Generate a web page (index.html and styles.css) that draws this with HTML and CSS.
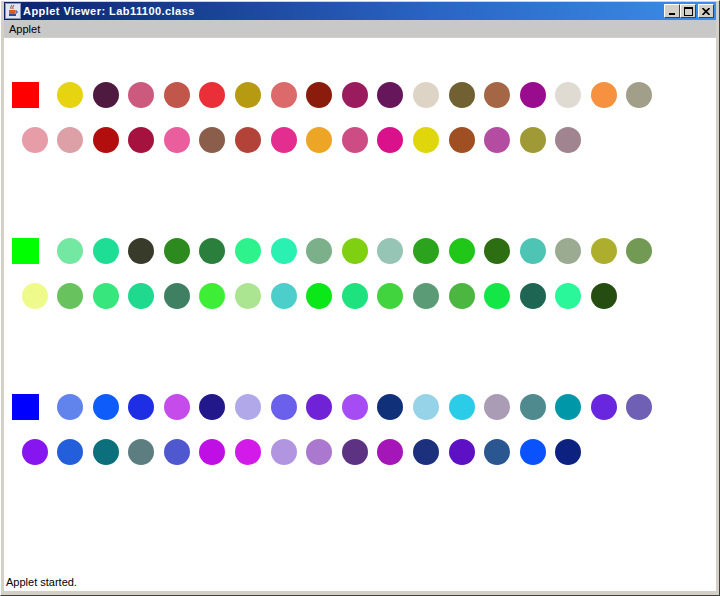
FILE: index.html
```html
<!DOCTYPE html>
<html lang="en">
<head>
  <meta charset="UTF-8">
  <title>Applet Viewer: Lab11100.class</title>
  <link rel="stylesheet" href="styles.css">
</head>
<body>
  <div class="window">
    <div class="titlebar">
      <svg class="app-icon" width="16" height="16" viewBox="0 0 16 16">
        <rect x="0.5" y="0.5" width="15" height="15" fill="#dfe6f2" stroke="#8a97b0"/>
        <path d="M4 11 h7 v2 h-7 z" fill="#2c4f9c"/>
        <path d="M4 7 h6 v4 h-6 z" fill="#d85a2a"/>
        <path d="M10 8 h2 v2 h-2" fill="none" stroke="#2c4f9c"/>
        <path d="M6 6 q-1 -2 1 -4 M8 6 q-1 -2 1 -4" fill="none" stroke="#c43a2a"/>
      </svg>
      <span class="title">Applet Viewer: Lab11100.class</span>
      <div class="controls">
        <span class="ctl">
          <svg width="8" height="7" viewBox="0 0 8 7"><rect x="1" y="5" width="6" height="2" fill="#000"/></svg>
        </span>
        <span class="ctl">
          <svg width="9" height="9" viewBox="0 0 9 9"><rect x="0.5" y="0.5" width="8" height="8" fill="none" stroke="#000"/><rect x="0" y="0" width="9" height="2" fill="#000"/></svg>
        </span>
        <span class="ctl close">
          <svg width="8" height="7" viewBox="0 0 8 7"><path d="M0.5 0 L7.5 7 M7.5 0 L0.5 7" stroke="#000" stroke-width="1.6"/></svg>
        </span>
      </div>
    </div>
    <div class="menubar"><span class="menu">Applet</span></div>
    <div class="applet" id="applet"></div>
    <div class="status">Applet started.</div>
  </div>

  <script>
    // Each group: base colour square, then two rows of random shades
    var groups = [
      {
        base: '#ff0000',
        top: ['#e6d411', '#4f1a3f', '#cb5a7e', '#c1564a', '#ea2f38', '#b59a12', '#dd6a6b', '#8b1b0d', '#9a1c5e',
              '#66165b', '#ded4c6', '#716032', '#a46644', '#990c8e', '#dfdbd2', '#f6913f', '#a19e8a'],
        bottom: ['#e69da7', '#dda0a6', '#b30e0e', '#a6123f', '#eb5e9e', '#8b5e4c', '#b34338', '#e32d8f',
                 '#eda526', '#ce4c84', '#d9118b', '#e0d60c', '#a04f22', '#b44da2', '#a09a36', '#a08490']
      },
      {
        base: '#00ff00',
        top: ['#73e8a2', '#1ede95', '#383b2a', '#2d8a1e', '#2a7f3d', '#2ef28c', '#2af0b2', '#7cb08a', '#7ed011',
              '#97c5b5', '#2ca31d', '#20c618', '#2c6e11', '#4ec4b4', '#9bab92', '#adae2e', '#729a55'],
        bottom: ['#eefa8a', '#68c35e', '#37e67c', '#1ed98e', '#3f8062', '#3eee36', '#abe592', '#4ccfcb', '#0ae81a',
                 '#1ee27e', '#42d43e', '#5b9b76', '#4bb640', '#14e648', '#1f6553', '#2af79a', '#254d12']
      },
      {
        base: '#0000ff',
        top: ['#6184ec', '#0e5cfa', '#1e2ee4', '#c64beb', '#23188b', '#b1a8ea', '#6b60ec', '#7023d6', '#a64cf4',
              '#10307a', '#96d3e8', '#2bcce8', '#a99cb4', '#4e8a8e', '#0097a8', '#6826de', '#6f60b5'],
        bottom: ['#8615ef', '#245fdb', '#0c6f7c', '#5c7e80', '#5058cf', '#c00fe5', '#d21ae9', '#b295e0',
                 '#ab78d0', '#5e3282', '#a416b8', '#1c307e', '#5d10c4', '#2a5691', '#0a52fb', '#0d2180']
      }
    ];

    function makeDot(color) {
      var dot = document.createElement('span');
      dot.className = 'dot';
      dot.style.backgroundColor = color;
      return dot;
    }

    function buildApplet() {
      var applet = document.getElementById('applet');
      for (var i = 0; i < groups.length; i++) {
        var group = document.createElement('div');
        group.className = 'group';

        var first = document.createElement('div');
        first.className = 'row row-first';
        var square = document.createElement('span');
        square.className = 'square';
        square.style.backgroundColor = groups[i].base;
        first.appendChild(square);
        for (var j = 0; j < groups[i].top.length; j++) {
          first.appendChild(makeDot(groups[i].top[j]));
        }

        var second = document.createElement('div');
        second.className = 'row row-second';
        for (var k = 0; k < groups[i].bottom.length; k++) {
          second.appendChild(makeDot(groups[i].bottom[k]));
        }

        group.appendChild(first);
        group.appendChild(second);
        applet.appendChild(group);
      }
    }

    buildApplet();
  </script>
</body>
</html>
```

FILE: styles.css
```css
* {
  box-sizing: border-box;
}

body {
  margin: 0;
  font-family: "Liberation Sans", Arial, sans-serif;
  background-color: #d4d0c8;
}

.window {
  width: 720px;
  height: 596px;
  display: flex;
  flex-direction: column;
  padding: 1px 3px 4px 3px;
  background-color: #d4d0c8;
  border-left: 1px solid #ffffff;
  border-top: 1px solid #ffffff;
  border-right: 1px solid #404040;
  border-bottom: 1px solid #404040;
}

.titlebar {
  height: 18px;
  display: flex;
  align-items: center;
  padding: 0 2px 0 1px;
  background: linear-gradient(90deg, #0a246a 0%, #2a64c4 60%, #3c8ee8 100%);
  color: #fff;
}

.app-icon {
  flex: none;
  margin-right: 2px;
}

.title {
  font-weight: bold;
  font-size: 11px;
  letter-spacing: 0.45px;
}

.controls {
  margin-left: auto;
  display: flex;
}

.ctl {
  width: 16px;
  height: 14px;
  display: flex;
  align-items: center;
  justify-content: center;
  background-color: #d4d0c8;
  border-top: 1px solid #ffffff;
  border-left: 1px solid #ffffff;
  border-right: 1px solid #404040;
  border-bottom: 1px solid #404040;
}

.close {
  margin-left: 2px;
}

.menubar {
  height: 17px;
  display: flex;
  align-items: center;
  padding-left: 5px;
  background-color: #c8c8c8;
  font-size: 11px;
  color: #000;
}

.applet {
  flex: 1;
  margin-top: 1px;
  padding-top: 44px;
  background-color: #ffffff;
}

.group {
  display: flex;
  flex-direction: column;
  gap: 19px;
  margin-bottom: 85px;
}

.row {
  display: flex;
  align-items: center;
  gap: 9.6px;
  height: 26px;
}

.row-first {
  padding-left: 8px;
}

.row-second {
  padding-left: 17.5px;
}

.square {
  width: 27px;
  height: 26px;
  margin-right: 8.4px;
  flex: none;
}

.dot {
  width: 26px;
  height: 26px;
  border-radius: 50%;
  flex: none;
}

.status {
  height: 18px;
  padding-left: 2px;
  display: flex;
  align-items: center;
  background-color: #ffffff;
  font-size: 11px;
  color: #000;
}
```
